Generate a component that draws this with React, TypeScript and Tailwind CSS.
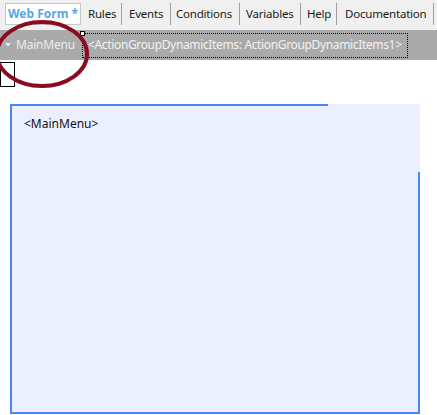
import React from "react";

const tabs = [
  { label: "Rules", w: "w-[41px]", pl: "pl-[7px]" },
  { label: "Events", w: "w-[49px]", pl: "pl-[7px]" },
  { label: "Conditions", w: "w-[69px]", pl: "pl-[5px]" },
  { label: "Variables", w: "w-[61px]", pl: "pl-[6px]" },
  { label: "Help", w: "w-[36px]", pl: "pl-[6px]" },
  { label: "Documentation", w: "w-[97px]", pl: "pl-[8px]" },
];

export default function App() {
  return (
    <div className="relative w-[437px] h-[415px] bg-white overflow-hidden font-['Noto_Sans',sans-serif] text-[12px]">
      {/* tab strip */}
      <div className="h-[30px] bg-[#f0f0f0] flex items-start pt-[3px] pl-[5px]">
        <div className="h-[22px] w-[76px] shrink-0 bg-white border border-[#c8c8c8] flex items-center pl-[2px] font-bold text-[12px] text-[#5aa5e6] whitespace-nowrap">
          Web Form *
        </div>
        <div className="flex items-center h-[22px]">
          {tabs.map((t) => (
            <div key={t.label} className={`${t.w} shrink-0 flex items-center justify-between h-[22px]`}>
              <span className={`${t.pl} text-[11.5px] text-[#1a1a1a] tracking-[-0.2px] whitespace-nowrap`}>{t.label}</span>
              <span className="w-px h-[22px] bg-[#a0a0a0]" />
            </div>
          ))}
        </div>
      </div>

      {/* breadcrumb bar */}
      <div className="h-[30px] bg-[#aaaaaa] flex items-center">
        <div className="flex items-center pl-[5px] w-[82px] text-[#ececec] tracking-[-0.2px]">
          <svg width="6" height="4" viewBox="0 0 6 4" className="mr-[5px]">
            <path d="M0 0 L6 0 L3 3.5 Z" fill="#ececec" />
          </svg>
          MainMenu
        </div>
        <div className="relative h-[25px] w-[326px] border border-dotted border-black flex items-center pl-[5px] text-[#f2f2f2] tracking-[-0.35px] whitespace-nowrap">
          &lt;ActionGroupDynamicItems: ActionGroupDynamicItems1&gt;
          <span className="absolute -left-[3px] -top-[3px] w-[5px] h-[5px] bg-white border border-black" />
        </div>
      </div>

      {/* selection handle */}
      <div className="w-[15px] h-[25px] border border-black mt-[2px]" />

      {/* design surface */}
      <div className="relative ml-[10px] mt-[17px] w-[410px] h-[310px] bg-[#ecefff] border-l-2 border-b-2 border-[#4a86f7] pt-[11px] pl-[12px] text-[#111]">
        <span className="absolute left-0 top-0 w-[316px] h-[2px] bg-[#4a86f7]" />
        <span className="absolute right-0 top-[68px] bottom-0 w-[2px] bg-[#4a86f7]" />
        &lt;MainMenu&gt;
      </div>

      {/* annotation ellipse */}
      <svg className="absolute left-0 top-0 pointer-events-none" width="120" height="100">
        <ellipse cx="42" cy="54" rx="45" ry="32" fill="none" stroke="#8a0c20" strokeWidth="4" />
      </svg>
    </div>
  );
}
